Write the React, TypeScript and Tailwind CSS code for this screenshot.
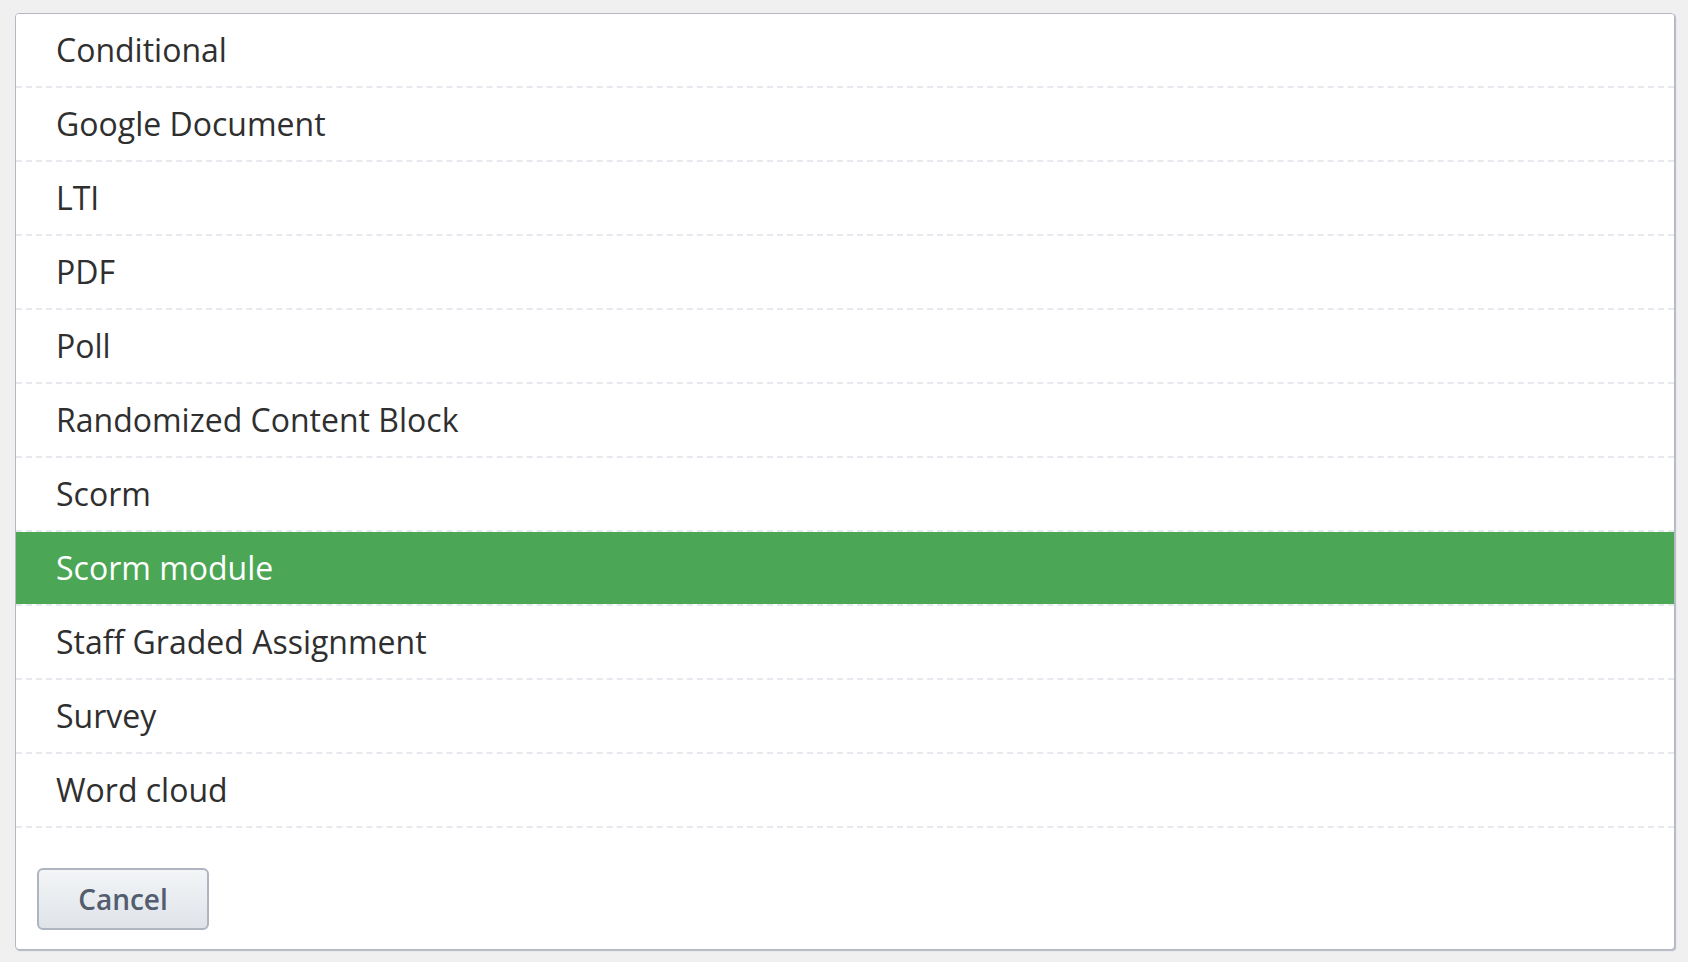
import React, { useState } from 'react';

const items = [
  'Conditional',
  'Google Document',
  'LTI',
  'PDF',
  'Poll',
  'Randomized Content Block',
  'Scorm',
  'Scorm module',
  'Staff Graded Assignment',
  'Survey',
  'Word cloud',
];

const App: React.FC = () => {
  const [selected, setSelected] = useState<string>('Scorm module');

  return (
    <div className="min-h-[962px] w-full bg-[#f0f0f0] pt-[13px] pl-[15px] font-['Open_Sans',sans-serif]">
      <div className="w-[1660px] h-[937px] bg-white border border-[#b3b8c3] rounded-[4px] shadow-[1px_1px_1px_#b3b8c3] flex flex-col overflow-hidden">
        <ul className="flex flex-col">
          {items.map(item => (
            <li key={item} className="border-b-2 border-dashed border-[#e6e9ee]">
              <button
                onClick={() => setSelected(item)}
                className={`w-full h-[72px] flex items-center pl-[40px] text-left text-[32px] ${
                  selected === item ? 'bg-[#4ba655] text-white' : 'bg-white text-[#2f2f2f]'
                }`}
              >
                {item}
              </button>
            </li>
          ))}
        </ul>
        <div className="pt-[40px] pl-[21px]">
          <button className="w-[172px] h-[62px] rounded-[6px] border-2 border-[#aeb5c1] bg-gradient-to-b from-[#f3f5f7] to-[#dfe3e8] text-[28px] font-semibold text-[#525d6f] flex items-center justify-center">
            Cancel
          </button>
        </div>
      </div>
    </div>
  );
};

export default App;
